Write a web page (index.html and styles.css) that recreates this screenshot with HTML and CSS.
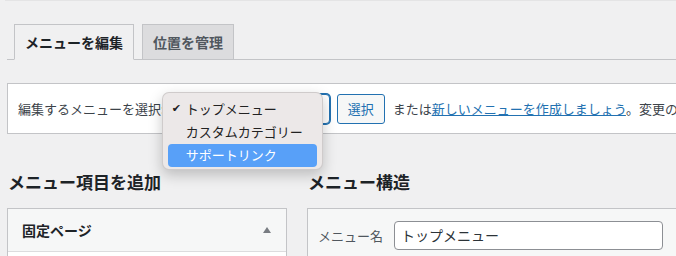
FILE: index.html
```html
<!DOCTYPE html>
<html lang="ja">
<head>
<meta charset="utf-8">
<link rel="stylesheet" href="styles.css">
</head>
<body>
<div class="topline"></div>
<div class="wrap">
  <nav class="tabs">
    <span class="tab tab-active">メニューを編集</span>
    <span class="tab">位置を管理</span>
  </nav>

  <div class="manage">
    <span class="label">編集するメニューを選択:</span>
    <div class="select-wrap">
      <div class="select"></div>
      <div class="popup">
        <div class="opt"><span class="check">✔</span>トップメニュー</div>
        <div class="opt">カスタムカテゴリー</div>
        <div class="opt opt-hl">サポートリンク</div>
      </div>
    </div>
    <span class="btn">選択</span>
    <span class="after">または<a class="link">新しいメニューを作成しましょう</a>。変更の保存を忘れずに。</span>
  </div>

  <div class="columns">
    <div class="col-left">
      <h2 class="heading">メニュー項目を追加</h2>
      <div class="panel">
        <div class="panel-head">
          <span class="panel-title">固定ページ</span>
          <span class="tri"></span>
        </div>
        <div class="panel-body"></div>
      </div>
    </div>
    <div class="col-right">
      <h2 class="heading">メニュー構造</h2>
      <div class="panel panel-right">
        <div class="name-row">
          <span class="name-label">メニュー名</span>
          <div class="input">トップメニュー</div>
        </div>
      </div>
    </div>
  </div>
</div>
</body>
</html>
```

FILE: styles.css
```css
html, body {
  margin: 0;
  padding: 0;
}
body {
  width: 676px;
  height: 256px;
  overflow: hidden;
  background: #f0f0f1;
  font-family: "Noto Sans CJK JP", "Noto Sans", sans-serif;
  color: #3c434a;
  font-size: 13px;
}
.topline {
  height: 1px;
  margin-left: 5px;
  background: #e4e4e5;
}
.wrap {
  padding-left: 7px;
  padding-top: 23px;
}
.tabs {
  display: flex;
  gap: 8px;
  padding-left: 7px;
  height: 35px;
  border-bottom: 1px solid #c3c4c7;
  width: 1000px;
}
.tab {
  box-sizing: border-box;
  height: 36px;
  padding: 0 10px;
  border: 1px solid #c3c4c7;
  background: #dcdcde;
  font-size: 14px;
  font-weight: 700;
  line-height: 34px;
  color: #50575e;
  white-space: nowrap;
}
.tab-active {
  background: #f0f0f1;
  border-bottom-color: #f0f0f1;
  color: #1d2327;
}
.manage {
  margin-top: 23px;
  box-sizing: border-box;
  height: 51px;
  width: 1000px;
  background: #fff;
  border: 1px solid #c3c4c7;
  display: flex;
  align-items: center;
  padding-left: 10px;
  white-space: nowrap;
}
.label {
  color: #3c434a;
}
.select-wrap {
  position: relative;
  margin-left: 0;
}
.select {
  box-sizing: border-box;
  width: 165px;
  height: 30px;
  border: 1px solid #2271b1;
  box-shadow: 0 0 0 1px #2271b1;
  border-radius: 4px;
  background: #fff;
}
.popup {
  position: absolute;
  left: -3px;
  top: -2px;
  box-sizing: border-box;
  width: 161px;
  height: 78px;
  padding: 5px 5px 4px;
  background: #ece8e8;
  border: 1px solid rgba(0, 0, 0, 0.12);
  border-radius: 7px;
  box-shadow: 0 5px 14px rgba(0, 0, 0, 0.22);
  z-index: 5;
}
.opt {
  position: relative;
  height: 23px;
  line-height: 22px;
  padding-left: 18px;
  font-size: 13px;
  color: #222;
  border-radius: 4px;
}
.check {
  position: absolute;
  left: 4px;
  top: 0;
  font-family: "DejaVu Sans", sans-serif;
  font-size: 11px;
}
.opt-hl {
  background: #58a0f8;
  color: #fff;
}
.btn {
  margin-left: 7px;
  box-sizing: border-box;
  height: 30px;
  padding: 0 10px;
  border: 1px solid #2271b1;
  border-radius: 3px;
  background: #f6f7f7;
  color: #2271b1;
  line-height: 28px;
}
.after {
  margin-left: 8px;
  color: #3c434a;
}
.link {
  color: #2271b1;
  text-decoration: underline;
}
.columns {
  display: flex;
  gap: 20px;
  margin-top: 36px;
}
.col-left {
  width: 280px;
  flex: none;
}
.col-right {
  width: 500px;
  flex: none;
}
.heading {
  margin: 0 0 14px 1px;
  font-size: 17px;
  line-height: 24px;
  font-weight: 700;
  color: #1d2327;
}
.panel {
  box-sizing: border-box;
  border: 1px solid #c3c4c7;
  background: #fff;
}
.panel-head {
  height: 42px;
  background: #f6f7f7;
  border-bottom: 1px solid #dcdcde;
  display: flex;
  align-items: center;
  justify-content: space-between;
  padding: 0 14px 0 14px;
}
.panel-title {
  font-size: 14px;
  font-weight: 700;
  color: #1d2327;
}
.tri {
  width: 0;
  height: 0;
  border-left: 4px solid transparent;
  border-right: 4px solid transparent;
  border-bottom: 6px solid #787c82;
  margin-right: 1px;
}
.panel-body {
  height: 20px;
}
.panel-right {
  background: #f6f7f7;
  height: 60px;
}
.name-row {
  display: flex;
  align-items: center;
  padding: 12px 10px 0;
}
.name-label {
  color: #50575e;
  width: 76px;
}
.input {
  box-sizing: border-box;
  width: 269px;
  height: 29px;
  border: 1px solid #8c8f94;
  border-radius: 4px;
  background: #fff;
  padding-left: 6px;
  font-size: 14px;
  line-height: 27px;
  color: #2c3338;
}
```
